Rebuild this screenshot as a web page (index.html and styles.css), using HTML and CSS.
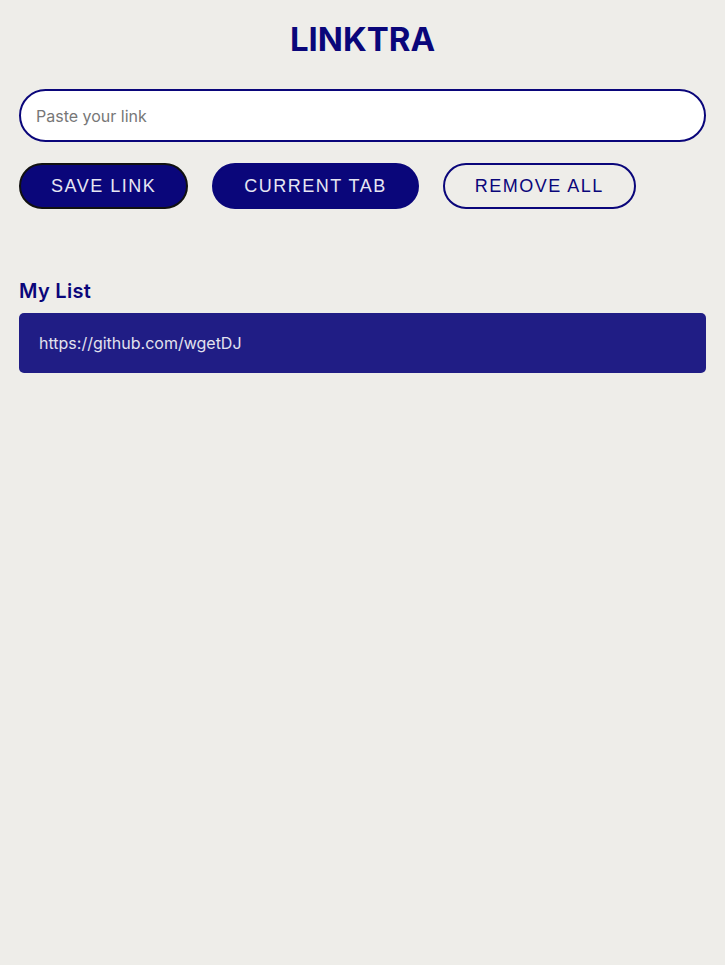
FILE: index.html
```html
<!DOCTYPE html>
<html lang="en">
<head>
<meta charset="utf-8">
<title>Linktra</title>
<link rel="stylesheet" href="styles.css">
</head>
<body>
<main class="app">
  <h1 class="title">LINKTRA</h1>
  <input class="link-input" type="text" placeholder="Paste your link">
  <div class="actions">
    <button class="btn btn-solid btn-focus">SAVE LINK</button>
    <button class="btn btn-solid">CURRENT TAB</button>
    <button class="btn btn-outline">REMOVE ALL</button>
  </div>
  <h2 class="list-title">My List</h2>
  <ul class="links">
    <li class="link-item">https://github.com/wgetDJ</li>
  </ul>
</main>
</body>
</html>
```
FILE: styles.css
```css
html, body {
  margin: 0;
  padding: 0;
  background: #eeede9;
}
body {
  font-family: Inter, "Noto Sans", sans-serif;
}
.app {
  padding: 0 19px;
  display: flex;
  flex-direction: column;
}
.title {
  margin: 19px 0 0;
  text-align: center;
  font-size: 33px;
  line-height: 40px;
  font-weight: 700;
  color: #0a067a;
}
.link-input {
  margin-top: 30px;
  box-sizing: border-box;
  height: 53px;
  width: 100%;
  border: 2px solid #0a067a;
  border-radius: 27px;
  background: #fff;
  padding: 0 15px;
  font-family: Inter, sans-serif;
  font-size: 16px;
  outline: none;
}
.link-input::placeholder {
  color: #777;
}
.actions {
  display: flex;
  gap: 24px;
  margin-top: 21px;
}
.btn {
  box-sizing: border-box;
  height: 46px;
  padding: 0 30px;
  border-radius: 23px;
  font-family: "Liberation Sans", Arial, sans-serif;
  font-size: 18px;
  letter-spacing: 1.5px;
  cursor: pointer;
}
.btn-solid {
  background: #0a067a;
  color: #e6e6f2;
  border: 2px solid #0a067a;
}
.btn-focus {
  border-color: #111;
}
.btn-outline {
  background: transparent;
  color: #0a067a;
  border: 2px solid #0a067a;
}
.list-title {
  margin: 70px 0 0;
  font-size: 20px;
  line-height: 24px;
  font-weight: 600;
  color: #0a067a;
  letter-spacing: 0.3px;
}
.links {
  list-style: none;
  margin: 10px 0 0;
  padding: 0;
}
.link-item {
  background: #201d85;
  color: #e2e2ee;
  border-radius: 5px;
  height: 60px;
  display: flex;
  align-items: center;
  padding: 0 20px;
  font-size: 16px;
}
```
